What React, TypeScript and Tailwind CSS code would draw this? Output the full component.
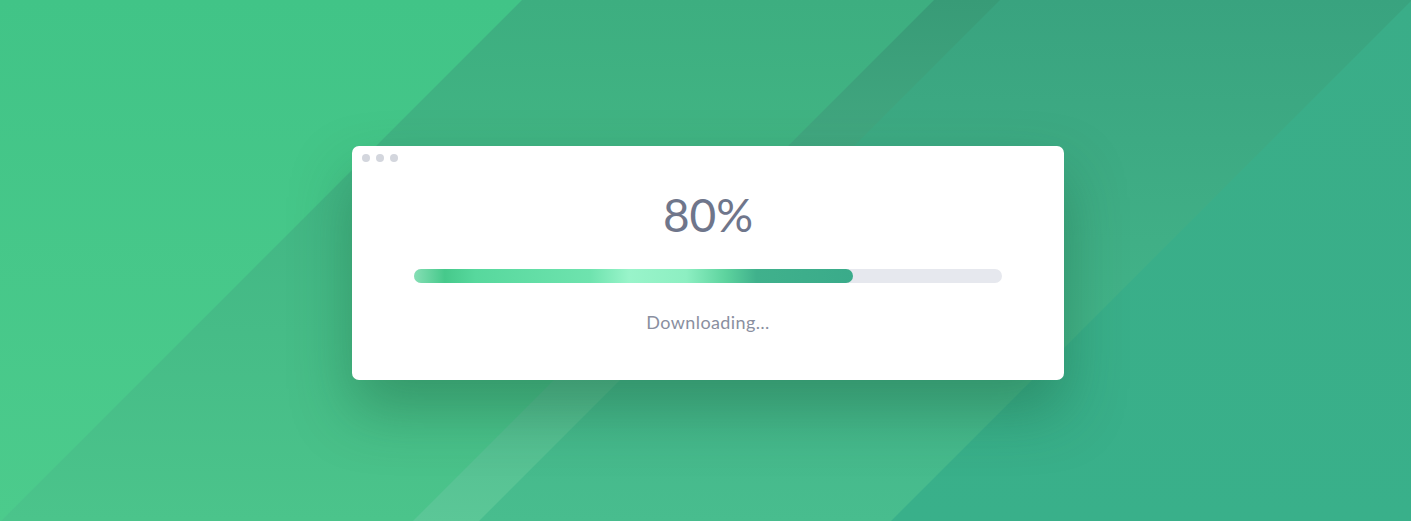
import React from 'react';

type Band = { id: string; c: number; top: string; bottom: string };

const W = 1411;
const H = 521;

// diagonal bands, right edge along x + y = c; drawn back to front so edges don't seam
const bands: Band[] = [
  { id: 'b5', c: 2200, top: '#3aad88', bottom: '#39b08a' },
  { id: 'b4', c: 1412, top: '#39a37f', bottom: '#48bd8e' },
  { id: 'b3', c: 1000, top: '#389b77', bottom: '#5bc797' },
  { id: 'b2', c: 934, top: '#3dae80', bottom: '#4bc48b' },
  { id: 'b1', c: 522, top: '#41c487', bottom: '#4ccb8c' },
];

function Backdrop() {
  return (
    <svg className="absolute inset-0 h-full w-full" viewBox={`0 0 ${W} ${H}`} preserveAspectRatio="none">
      <defs>
        {bands.map((b) => (
          <linearGradient key={b.id} id={b.id} gradientUnits="userSpaceOnUse" x1="0" y1="0" x2="0" y2={H}>
            <stop offset="0" stopColor={b.top} />
            <stop offset="1" stopColor={b.bottom} />
          </linearGradient>
        ))}
      </defs>
      {bands.map((b) => (
        <polygon key={b.id} fill={`url(#${b.id})`} points={`-800,0 ${b.c},0 ${b.c - H},${H} -800,${H}`} />
      ))}
    </svg>
  );
}

function ProgressBar({ value }: { value: number }) {
  return (
    <div className="mx-[62px] mt-[31px] h-[14px] rounded-full bg-[#e6e8ee]">
      <div
        className="h-full rounded-full bg-[linear-gradient(90deg,#86dfb5_0%,#46c98b_7%,#57d89d_14%,#6ee3ae_40%,#99f4ca_49%,#8defc2_62%,#5dd39e_71%,#40b18c_78%,#3aab8a_100%)]"
        style={{ width: `${value}%` }}
      />
    </div>
  );
}

export default function App() {
  return (
    <div className="relative h-[521px] w-full overflow-hidden font-['Lato',sans-serif]">
      <Backdrop />
      <div className="relative pl-[352px] pt-[146px]">
        <div className="h-[234px] w-[712px] rounded-[7px] bg-white shadow-[0_30px_60px_rgba(20,80,50,0.35)]">
          <div className="flex gap-[6px] pl-[10px] pt-[8px]">
            <span className="h-2 w-2 rounded-full bg-[#d3d6dd]" />
            <span className="h-2 w-2 rounded-full bg-[#d3d6dd]" />
            <span className="h-2 w-2 rounded-full bg-[#d3d6dd]" />
          </div>
          <p className="mt-[30px] text-center text-[46px] leading-[46px] text-[#6f768b]">80%</p>
          <ProgressBar value={74.6} />
          <p className="mt-[30px] text-center text-[18px] leading-[18px] tracking-[0.4px] text-[#8a8fa0]">
            Downloading…
          </p>
        </div>
      </div>
    </div>
  );
}
